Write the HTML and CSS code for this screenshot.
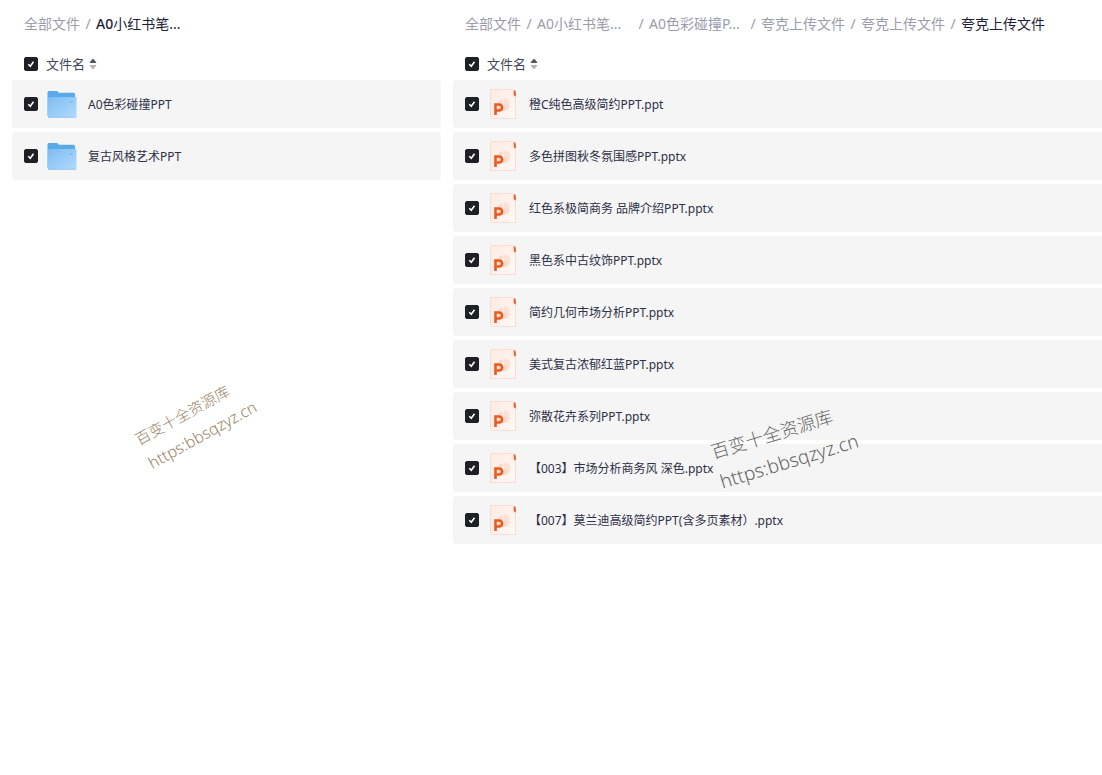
FILE: index.html
```html
<!DOCTYPE html>
<html lang="zh-CN">
  <head>
    <meta charset="UTF-8" />
    <meta name="viewport" content="width=device-width, initial-scale=1.0" />
    <title>全部文件</title>
    <link rel="stylesheet" href="styles.css">
  </head>
  <body>
    <svg class="sprite" aria-hidden="true">
      <defs>
        <linearGradient id="folderFront" x1="0" y1="0" x2="1" y2="1">
          <stop offset="0" stop-color="#7dbdf3" />
          <stop offset="1" stop-color="#b3dafc" />
        </linearGradient>
        <linearGradient id="pptPaper" x1="0" y1="0" x2="1" y2="1">
          <stop offset="0" stop-color="#fdebe4" />
          <stop offset="1" stop-color="#fef8f5" />
        </linearGradient>
      </defs>
      <symbol id="folder" viewBox="0 0 32 32">
        <path d="M1.500 4.500q0-1.500 1.500-1.500h7.500q1 0 1.600.8l.7 1h14.700q1.500 0 1.500 1.500V28h-27.500z" fill="#5aaaea" />
        <path d="M3.500 9h26q1 0 1 1v18.500q0 1.200-1.200 1.200H2.300q-.5 0-.3-1V10.500q0-1.500 1.500-1.500z" fill="url(#folderFront)" />
        <path d="M2 29.300h28" stroke="#8fc6f5" stroke-width=".8" />
        <path d="M23.500 14h3.500" stroke="#7ab8ee" stroke-width="1.400" />
      </symbol>
      <symbol id="ppt" viewBox="0 0 32 32">
        <path d="M3.500 1.500h22l3 5v24h-25z" fill="url(#pptPaper)" stroke="#fbdccf" />
        <path d="M26.800 2q2 .3 2 2.400V8.600l-1.300-.6q-.7-.4-.7-1.200z" fill="#ea5a1e" />
        <path d="M15.800 11.300v6h-5.500a6 6 0 0 1 5.500-6zM10.300 18.300H17v-7.500l5.500 7.200a6.200 6.200 0 0 1-12.200.3z" fill="#fbdacd" />
        <path d="M17.300 10v6.800h5.900a6 6 0 0 0-5.900-6.800z" fill="#fce1d7" />
        <path d="M8.500 27V16.500h3.600a3 3 0 0 1 0 6H8.500" fill="none" stroke="#ea5a1e" stroke-width="2.600" />
      </symbol>
      <symbol id="sort" viewBox="0 0 8 12">
        <path d="M1 5Q.4 5 .8 4.200L3.200 1.300q.8-.8 1.600 0l2.400 2.900Q7.600 5 7 5z" fill="#55565c" />
        <path d="M1 7Q.4 7 .8 7.800l2.400 2.900q.8.8 1.600 0l2.400-2.900Q7.600 7 7 7z" fill="#b4b4b6" />
      </symbol>
    </svg>

    <main class="panels">
      <section class="panel">
        <nav class="crumbs">
          <a class="crumb" href="#">全部文件</a>
          <a class="crumb folder-name current" href="#"><b>A0</b>小红书笔...</a>
        </nav>
        <div class="list-head">
          <input type="checkbox" id="allLeft" aria-label="全选" checked />
          <label for="allLeft">文件名</label>
          <button class="sort" aria-label="排序"><svg><use href="#sort" /></svg></button>
        </div>
        <ul class="files">
          <li class="file">
            <input type="checkbox" id="d1" checked />
            <svg class="icon"><use href="#folder" /></svg>
            <label for="d1">A0色彩碰撞PPT</label>
          </li>
          <li class="file">
            <input type="checkbox" id="d2" checked />
            <svg class="icon"><use href="#folder" /></svg>
            <label for="d2">复古风格艺术PPT</label>
          </li>
        </ul>
      </section>

      <section class="panel">
        <nav class="crumbs">
          <a class="crumb" href="#">全部文件</a>
          <a class="crumb folder-name" href="#">A0小红书笔...</a>
          <a class="crumb folder-name" href="#">A0色彩碰撞P...</a>
          <a class="crumb" href="#">夸克上传文件</a>
          <a class="crumb" href="#">夸克上传文件</a>
          <a class="crumb current" href="#">夸克上传文件</a>
        </nav>
        <div class="list-head">
          <input type="checkbox" id="allRight" aria-label="全选" checked />
          <label for="allRight">文件名</label>
          <button class="sort" aria-label="排序"><svg><use href="#sort" /></svg></button>
        </div>
        <ul class="files">
          <li class="file">
            <input type="checkbox" id="f1" checked />
            <svg class="icon"><use href="#ppt" /></svg>
            <label for="f1">橙C纯色高级简约PPT.ppt</label>
          </li>
          <li class="file">
            <input type="checkbox" id="f2" checked />
            <svg class="icon"><use href="#ppt" /></svg>
            <label for="f2">多色拼图秋冬氛围感PPT.pptx</label>
          </li>
          <li class="file">
            <input type="checkbox" id="f3" checked />
            <svg class="icon"><use href="#ppt" /></svg>
            <label for="f3">红色系极简商务 品牌介绍PPT.pptx</label>
          </li>
          <li class="file">
            <input type="checkbox" id="f4" checked />
            <svg class="icon"><use href="#ppt" /></svg>
            <label for="f4">黑色系中古纹饰PPT.pptx</label>
          </li>
          <li class="file">
            <input type="checkbox" id="f5" checked />
            <svg class="icon"><use href="#ppt" /></svg>
            <label for="f5">简约几何市场分析PPT.pptx</label>
          </li>
          <li class="file">
            <input type="checkbox" id="f6" checked />
            <svg class="icon"><use href="#ppt" /></svg>
            <label for="f6">美式复古浓郁红蓝PPT.pptx</label>
          </li>
          <li class="file">
            <input type="checkbox" id="f7" checked />
            <svg class="icon"><use href="#ppt" /></svg>
            <label for="f7">弥散花卉系列PPT.pptx</label>
          </li>
          <li class="file">
            <input type="checkbox" id="f8" checked />
            <svg class="icon"><use href="#ppt" /></svg>
            <label for="f8">【003】市场分析商务风 深色.pptx</label>
          </li>
          <li class="file">
            <input type="checkbox" id="f9" checked />
            <svg class="icon"><use href="#ppt" /></svg>
            <label for="f9">【007】莫兰迪高级简约PPT(含多页素材）.pptx</label>
          </li>
        </ul>
      </section>
    </main>

    <div class="watermark brown">
      <div class="site-name">百变十全资源库</div>
      <div>https:bbsqzyz.cn</div>
    </div>
    <div class="watermark gray">
      <div class="site-name">百变十全资源库</div>
      <div>https:bbsqzyz.cn</div>
    </div>
  </body>
</html>
```

FILE: styles.css
```css
body {
  margin: 0;
  background-color: #fff;
  color: #2e3046;
  font-family: "Noto Sans", "Noto Sans CJK SC", sans-serif;
  font-size: 12px;
  position: relative;
}

.sprite {
  position: absolute;
  width: 0;
  height: 0;
}

.panels {
  display: grid;
  grid-template-columns: 429fr 649fr;
  gap: 12px;
  padding-left: 12px;
}

.panel {
  min-width: 0;
}

.crumbs {
  display: flex;
  height: 48px;
  padding-left: 12px;
  align-items: center;
  font-size: 14px;
  line-height: 20px;
  white-space: nowrap;
}

.crumb {
  display: flex;
  color: #9b9cac;
  text-decoration: none;
}

.crumb + .crumb::before {
  content: "/";
  width: 16px;
  text-align: center;
  color: #9b9cac;
}

.folder-name {
  width: 112px;
}

.current {
  color: #1c1e36;
}

.current b {
  font-weight: 500;
}

.list-head {
  display: flex;
  height: 32px;
  padding-left: 12px;
  align-items: center;
  color: #45465a;
  font-size: 13px;
  line-height: 20px;
}

.list-head label {
  margin-left: 8px;
}

.sort {
  display: flex;
  margin-left: 4px;
  padding: 0;
  border: none;
  background: none;
  cursor: pointer;
}

.sort svg {
  width: 8px;
  height: 12px;
}

input[type="checkbox"] {
  appearance: none;
  flex: none;
  width: 14px;
  height: 14px;
  margin: 0;
  border: 1px solid #1f2026;
  border-radius: 2px;
  cursor: pointer;
}

input[type="checkbox"]:checked {
  background: #1f2026 url("data:image/svg+xml,%3Csvg xmlns='http://www.w3.org/2000/svg' viewBox='0 0 12 12'%3E%3Cpath d='M3.300 6.200l2 2.100 3.200-4.500' fill='none' stroke='white' stroke-width='1.600'/%3E%3C/svg%3E") center / 12px 12px no-repeat;
}

.files {
  display: flex;
  flex-direction: column;
  gap: 4px;
  margin: 0;
  padding: 0;
  list-style: none;
}

.file {
  display: flex;
  height: 48px;
  padding-left: 12px;
  align-items: center;
  background-color: #f5f5f5;
  border-radius: 4px;
  line-height: 20px;
  white-space: nowrap;
}

.file label {
  padding-top: 2px;
}

.panel:last-child .file {
  border-radius: 4px 0 0 4px;
}

.icon {
  width: 32px;
  height: 32px;
  margin: 0 10px 0 8px;
}

.watermark {
  position: absolute;
  transform-origin: left top;
  font-weight: 300;
  white-space: nowrap;
  pointer-events: none;
}

.brown {
  left: 130px;
  top: 429px;
  color: #9a8062;
  font-size: 16px;
  line-height: 27px;
  transform: rotate(-29deg);
}

.brown .site-name {
  font-size: 15px;
}

.gray {
  left: 707px;
  top: 438px;
  color: #666;
  font-size: 19px;
  line-height: 31px;
  transform: rotate(-17deg);
}

.gray .site-name {
  font-size: 18px;
}
```
